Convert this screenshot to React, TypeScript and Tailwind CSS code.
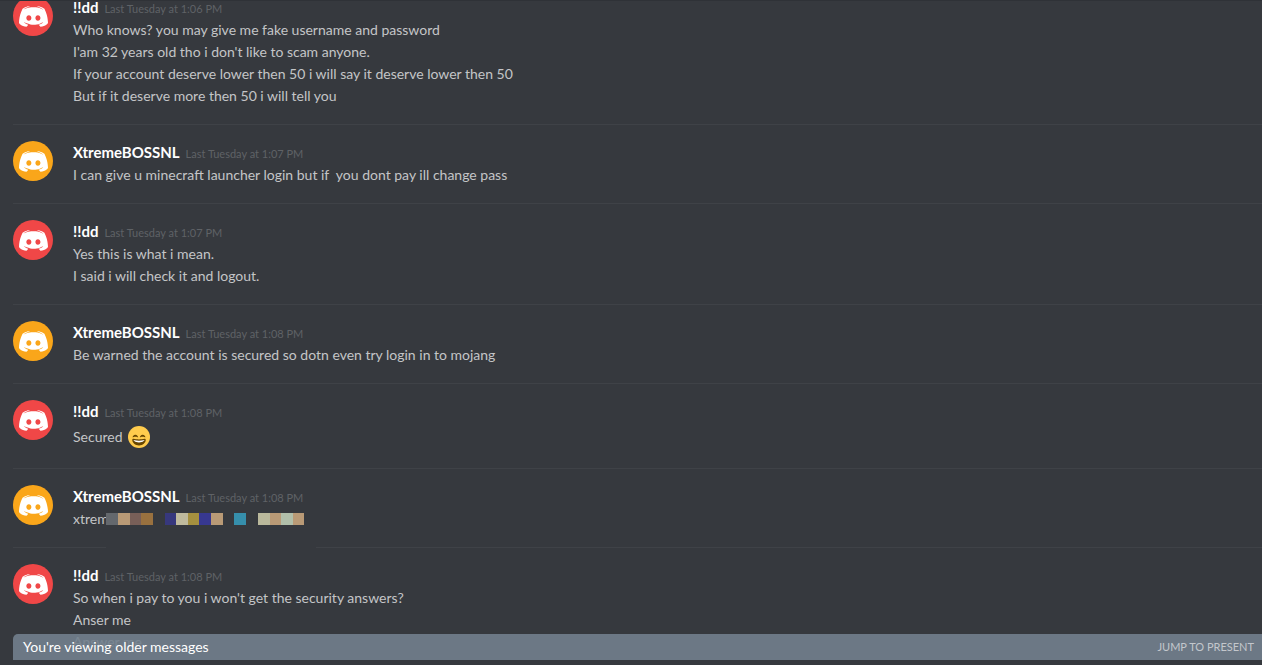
import type { ReactNode } from "react";

type Author = "dd" | "boss";

const AUTHORS: Record<Author, { name: string; color: string }> = {
  dd: { name: "!!dd", color: "bg-[#f04747]" },
  boss: { name: "XtremeBOSSNL", color: "bg-[#faa61a]" },
};

function Avatar({ color }: { color: string }) {
  return (
    <div className={`flex size-10 shrink-0 items-center justify-center rounded-full ${color}`}>
      <svg viewBox="0 0 28 20" className="h-[21px] w-[29px]" fill="#fff" aria-hidden="true">
        <path
          fillRule="evenodd"
          d="M20.6644 20C20.6644 20 19.8014 18.9762 19.0822 18.0714C22.2226 17.1905 23.4212 15.2381 23.4212 15.2381C22.4384 15.881 21.5034 16.3334 20.6644 16.6429C19.4658 17.1429 18.3151 17.4762 17.1884 17.6667C14.887 18.0953 12.7774 17.9762 10.9795 17.6429C9.61301 17.381 8.43836 17 7.45548 16.6191C6.90411 16.4048 6.30479 16.1429 5.70548 15.8096C5.63356 15.7619 5.56164 15.7381 5.48973 15.6905C5.44178 15.6667 5.41781 15.6429 5.39384 15.6191C4.96233 15.381 4.7226 15.2143 4.7226 15.2143C4.7226 15.2143 5.87329 17.1191 8.91781 18.0238C8.19863 18.9286 7.31164 20 7.31164 20C2.0137 19.8333 0 16.381 0 16.381C0 8.7144 3.45205 2.50017 3.45205 2.50017C6.90411 -0.07123 10.1884 0.00022 10.1884 0.00022L10.4281 0.28593C6.11301 1.52399 4.12329 3.40493 4.12329 3.40493C4.12329 3.40493 4.65068 3.11921 5.53767 2.71446C8.10274 1.5954 10.1404 1.2859 10.9795 1.21447C11.1233 1.19066 11.2432 1.16685 11.387 1.16685C12.8493 0.97638 14.5034 0.92876 16.2295 1.11923C18.5068 1.38112 20.9521 2.0478 23.4452 3.40493C23.4452 3.40493 21.5514 1.61922 17.476 0.38116L17.8116 0.0002C17.8116 0.0002 21.0959 -0.07123 24.5479 2.50017C24.5479 2.50017 28 8.7144 28 16.381C28 16.381 25.9623 19.8333 20.6644 20ZM9.51712 8.88106C8.15068 8.88106 7.07192 10.0715 7.07192 11.5239C7.07192 12.9763 8.17466 14.1667 9.51712 14.1667C10.8836 14.1667 11.9623 12.9763 11.9623 11.5239C11.9863 10.0715 10.8836 8.88106 9.51712 8.88106ZM18.2671 8.88106C16.9007 8.88106 15.8219 10.0715 15.8219 11.5239C15.8219 12.9763 16.9247 14.1667 18.2671 14.1667C19.6336 14.1667 20.7123 12.9763 20.7123 11.5239C20.7123 10.0715 19.6336 8.88106 18.2671 8.88106Z"
        />
      </svg>
    </div>
  );
}

function SmileEmoji() {
  return (
    <svg viewBox="0 0 36 36" className="size-[22px]" role="img" aria-label="smile">
      <circle cx="18" cy="18" r="18" fill="#ffcc4d" />
      <path
        fill="#664500"
        d="M28.457 17.797c-.06-.135-1.499-3.297-4.457-3.297-2.957 0-4.397 3.162-4.457 3.297-.092.207-.032.449.145.591.175.142.426.147.61.014.012-.009 1.262-.902 3.702-.902 2.426 0 3.674.881 3.702.901.088.066.194.099.298.099.11 0 .221-.037.312-.109.177-.142.238-.386.145-.594zm-12 0c-.06-.135-1.499-3.297-4.457-3.297-2.957 0-4.397 3.162-4.457 3.297-.092.207-.032.449.144.591.176.142.427.147.61.014.013-.009 1.262-.902 3.703-.902 2.426 0 3.674.881 3.702.901.088.066.194.099.298.099.11 0 .221-.037.312-.109.178-.142.237-.386.145-.594zM18 22c-3.623 0-6.027-.422-9-1-.679-.131-2 0-2 2 0 4 4.595 9 11 9 6.404 0 11-5 11-9 0-2-1.321-2.132-2-2-2.973.578-5.377 1-9 1z"
      />
      <path fill="#fff" d="M9 23s3 1 9 1 9-1 9-1-2 4-9 4-9-4-9-4z" />
    </svg>
  );
}

const REDACTED = [
  "w-[12px] bg-[#64686d]",
  "w-[12px] bg-[#b99a76]",
  "w-[11px] bg-[#785f58]",
  "w-[12px] bg-[#99713f]",
  "w-[12px]",
  "w-[11px] bg-[#37387d]",
  "w-[12px] bg-[#bfba9d]",
  "w-[11px] bg-[#a5903f]",
  "w-[12px] bg-[#373890]",
  "w-[12px] bg-[#b99a76]",
  "w-[11px]",
  "w-[12px] bg-[#368fac]",
  "w-[12px]",
  "w-[12px] bg-[#bab99c]",
  "w-[11px] bg-[#b99a76]",
  "w-[12px] bg-[#b1bfaa]",
  "w-[11px] bg-[#b99a76]",
];

function Redacted() {
  return (
    <div className="flex items-center">
      <span className="w-[33px]">xtrem</span>
      {REDACTED.map((block, i) => (
        <span key={i} className={`relative h-3 ${block}`} />
      ))}
    </div>
  );
}

function Message({
  author,
  time,
  lines,
  divider = "full",
}: {
  author: Author;
  time: string;
  lines: ReactNode[];
  divider?: "full" | "split" | "none";
}) {
  const { name, color } = AUTHORS[author];
  return (
    <li className="flex flex-col">
      <article className="flex gap-5 pt-4 pb-[17px]">
        <Avatar color={color} />
        <div className="min-w-0 flex-1">
          <h2 className="flex h-[23px] items-baseline gap-1.5 leading-[22px]">
            <span className="text-[15px] font-bold text-white">{name}</span>
            <time className="text-[11px] text-[#5f6266]">{time}</time>
          </h2>
          {lines.map((line, i) => (
            <div key={i} className="text-[14px] leading-[22px] whitespace-pre-wrap text-[#c4c5c7]">
              {line}
            </div>
          ))}
        </div>
      </article>
      {divider === "full" && <div className="h-px bg-[#3f4247]" />}
      {divider === "split" && (
        <div className="flex h-px gap-[210px]">
          <div className="w-[93px] bg-[#3f4247]" />
          <div className="flex-1 bg-[#3f4247]" />
        </div>
      )}
    </li>
  );
}

export default function App() {
  return (
    <main className="h-screen overflow-hidden border-t border-[#2f3237] bg-[#36393e] pb-[5px] pl-[13px] font-[Lato,sans-serif]">
      <div className="relative h-full overflow-hidden">
        <ul className="-mt-[21px]">
          <Message
            author="dd"
            time="Last Tuesday at 1:06 PM"
            lines={[
              "Who knows? you may give me fake username and password",
              "I'am 32 years old tho i don't like to scam anyone.",
              "If your account deserve lower then 50 i will say it deserve lower then 50",
              "But if it deserve more then 50 i will tell you",
            ]}
          />
          <Message
            author="boss"
            time="Last Tuesday at 1:07 PM"
            lines={["I can give u minecraft launcher login but if  you dont pay ill change pass"]}
          />
          <Message
            author="dd"
            time="Last Tuesday at 1:07 PM"
            lines={["Yes this is what i mean.", "I said i will check it and logout."]}
          />
          <Message
            author="boss"
            time="Last Tuesday at 1:08 PM"
            lines={["Be warned the account is secured so dotn even try login in to mojang"]}
          />
          <Message
            author="dd"
            time="Last Tuesday at 1:08 PM"
            lines={[
              <div className="flex h-7 items-center gap-1.5">
                <span>Secured</span>
                <SmileEmoji />
              </div>,
            ]}
          />
          <Message author="boss" time="Last Tuesday at 1:08 PM" lines={[<Redacted />]} divider="split" />
          <Message
            author="dd"
            time="Last Tuesday at 1:08 PM"
            lines={[
              "So when i pay to you i won't get the security answers?",
              "Anser me",
              "Answer me",
            ]}
            divider="none"
          />
        </ul>
        <div className="absolute inset-x-0 bottom-0 flex h-[26px] items-center justify-between rounded-tl-[5px] bg-[#727f8d]/90 pr-2 pl-2.5">
          <span className="text-[14px] leading-[22px] text-white">You're viewing older messages</span>
          <button type="button" className="text-[11px] text-[#c3c7cc]">
            JUMP TO PRESENT
          </button>
        </div>
      </div>
    </main>
  );
}
